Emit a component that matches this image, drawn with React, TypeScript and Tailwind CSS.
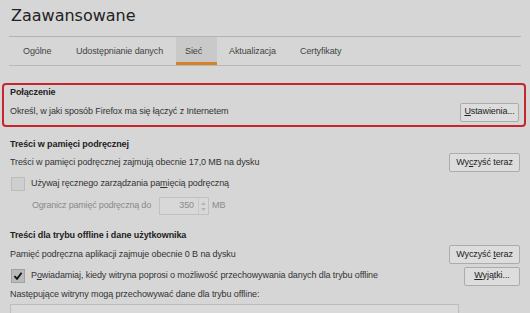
import React from 'react';

const tabs = [
  { label: 'Ogólne', cls: 'ml-[5px] w-[53px]' },
  { label: 'Udostępnianie danych', cls: 'w-[109px]' },
  { label: 'Sieć', cls: 'w-[41px]', active: true },
  { label: 'Aktualizacja', cls: 'ml-[3px] w-[71px]' },
  { label: 'Certyfikaty', cls: 'w-[70px]' },
];

const Button: React.FC<{ className?: string; children: React.ReactNode }> = ({ className = '', children }) => (
  <div
    className={`h-[19px] flex items-center justify-center bg-[#dddddd] border border-[#acacac] rounded-[2px] text-[#222] shrink-0 ${className}`}
  >
    <span>{children}</span>
  </div>
);

const Checkbox: React.FC<{ checked?: boolean }> = ({ checked }) => (
  <div
    className={`w-[14px] h-[14px] ml-[1px] shrink-0 flex items-center justify-center border ${
      checked ? 'bg-[#bababa] border-[#a2a2a2]' : 'bg-[#cecece] border-[#bcbcbc]'
    }`}
  >
    {checked && (
      <svg width="10" height="10" viewBox="0 0 10 10">
        <path d="M1.5 5.2 L4 7.8 L8.6 1.8" fill="none" stroke="#111" strokeWidth="1.8" />
      </svg>
    )}
  </div>
);

export default function App() {
  return (
    <div
      className="w-[530px] h-[313px] overflow-hidden bg-[#d6d6d6] text-[9px] tracking-[-0.1px] text-[#333]"
      style={{ fontFamily: '"Liberation Sans", Arial, sans-serif' }}
    >
      {/* title */}
      <div className="mx-[9px] h-[37px] border-b border-[#b3b3b3] pl-[2px] leading-[32px] text-[16px] tracking-normal text-[#222] font-['DejaVu_Sans',sans-serif]">
        Zaawansowane
      </div>

      {/* tabs */}
      <div className="mx-[9px] h-[29px] border-b border-[#b8b8b8] flex items-stretch">
        {tabs.map(t => (
          <div
            key={t.label}
            className={`${t.cls} pl-[9px] flex items-center text-[#444] ${
              t.active ? 'bg-[#c9c9c9] border-b-[3px] border-[#d6822c] pt-[4px]' : 'pt-[1px]'
            }`}
          >
            {t.label}
          </div>
        ))}
      </div>

      {/* Połączenie */}
      <div className="mt-[17px] ml-[2px] mr-[4px] border-2 border-[#c4262e] rounded-[4px] pl-[6px] pr-[5px] pb-[1px]">
        <div className="h-[15px] flex items-center font-bold text-[#222]">Połączenie</div>
        <div className="h-[24px] flex items-center justify-between">
          <span>Określ, w jaki sposób Firefox ma się łączyć z Internetem</span>
          <Button className="w-[59px]">
            <span className="underline">U</span>stawienia...
          </Button>
        </div>
      </div>

      {/* Treści w pamięci podręcznej */}
      <div className="mt-[10px] px-[10px]">
        <div className="h-[16px] flex items-center font-bold text-[#222]">Treści w pamięci podręcznej</div>
        <div className="h-[19px] flex items-center justify-between">
          <span>Treści w pamięci podręcznej zajmują obecnie 17,0 MB na dysku</span>
          <Button className="w-[71px]">
            Wy<span className="underline">c</span>zyść teraz
          </Button>
        </div>
        <div className="mt-[2px] h-[20px] flex items-center gap-[6px]">
          <Checkbox />
          <span>
            Używaj ręcznego zarządzania pa<span className="underline">m</span>ięcią podręczną
          </span>
        </div>
        <div className="mt-[3px] h-[18px] flex items-center pl-[22px] text-[#8a8a8a]">
          <span className="w-[127px] whitespace-nowrap tracking-[-0.2px]">Ogranicz pamięć podręczną do</span>
          <div className="w-[50px] h-[18px] border border-[#c2c2c2] bg-[#d8d8d8] flex items-center justify-end">
            <span className="mr-[4px] text-[#8a8a8a]">350</span>
            <div className="w-[10px] h-full border-l border-[#c8c8c8] flex flex-col items-center justify-center gap-[3px]">
              <svg width="5" height="3" viewBox="0 0 5 3">
                <path d="M0 3 L2.5 0 L5 3 Z" fill="#b4b4b4" />
              </svg>
              <svg width="5" height="3" viewBox="0 0 5 3">
                <path d="M0 0 L2.5 3 L5 0 Z" fill="#b4b4b4" />
              </svg>
            </div>
          </div>
          <span className="ml-[3px]">MB</span>
        </div>
      </div>

      {/* Treści dla trybu offline */}
      <div className="mt-[13px] px-[10px]">
        <div className="h-[16px] flex items-center font-bold text-[#222]">
          Treści dla trybu offline i dane użytkownika
        </div>
        <div className="mt-[1px] h-[19px] flex items-center justify-between">
          <span>Pamięć podręczna aplikacji zajmuje obecnie 0 B na dysku</span>
          <Button className="w-[71px]">
            Wyczyść <span className="underline">t</span>eraz
          </Button>
        </div>
        <div className="mt-[2px] h-[20px] flex items-center gap-[6px]">
          <Checkbox checked />
          <span className="flex-1">
            P<span className="underline">o</span>wiadamiaj, kiedy witryna poprosi o możliwość przechowywania danych dla trybu offline
          </span>
          <Button className="w-[56px]">
            <span className="underline">W</span>yjątki...
          </Button>
        </div>
        <div className="mt-[2px] h-[14px] flex items-center">
          Następujące witryny mogą przechowywać dane dla trybu offline:
        </div>
        <div className="mt-[2px] w-[449px] h-[30px] border border-[#bcbcbc] bg-[#dadada]" />
      </div>
    </div>
  );
}
